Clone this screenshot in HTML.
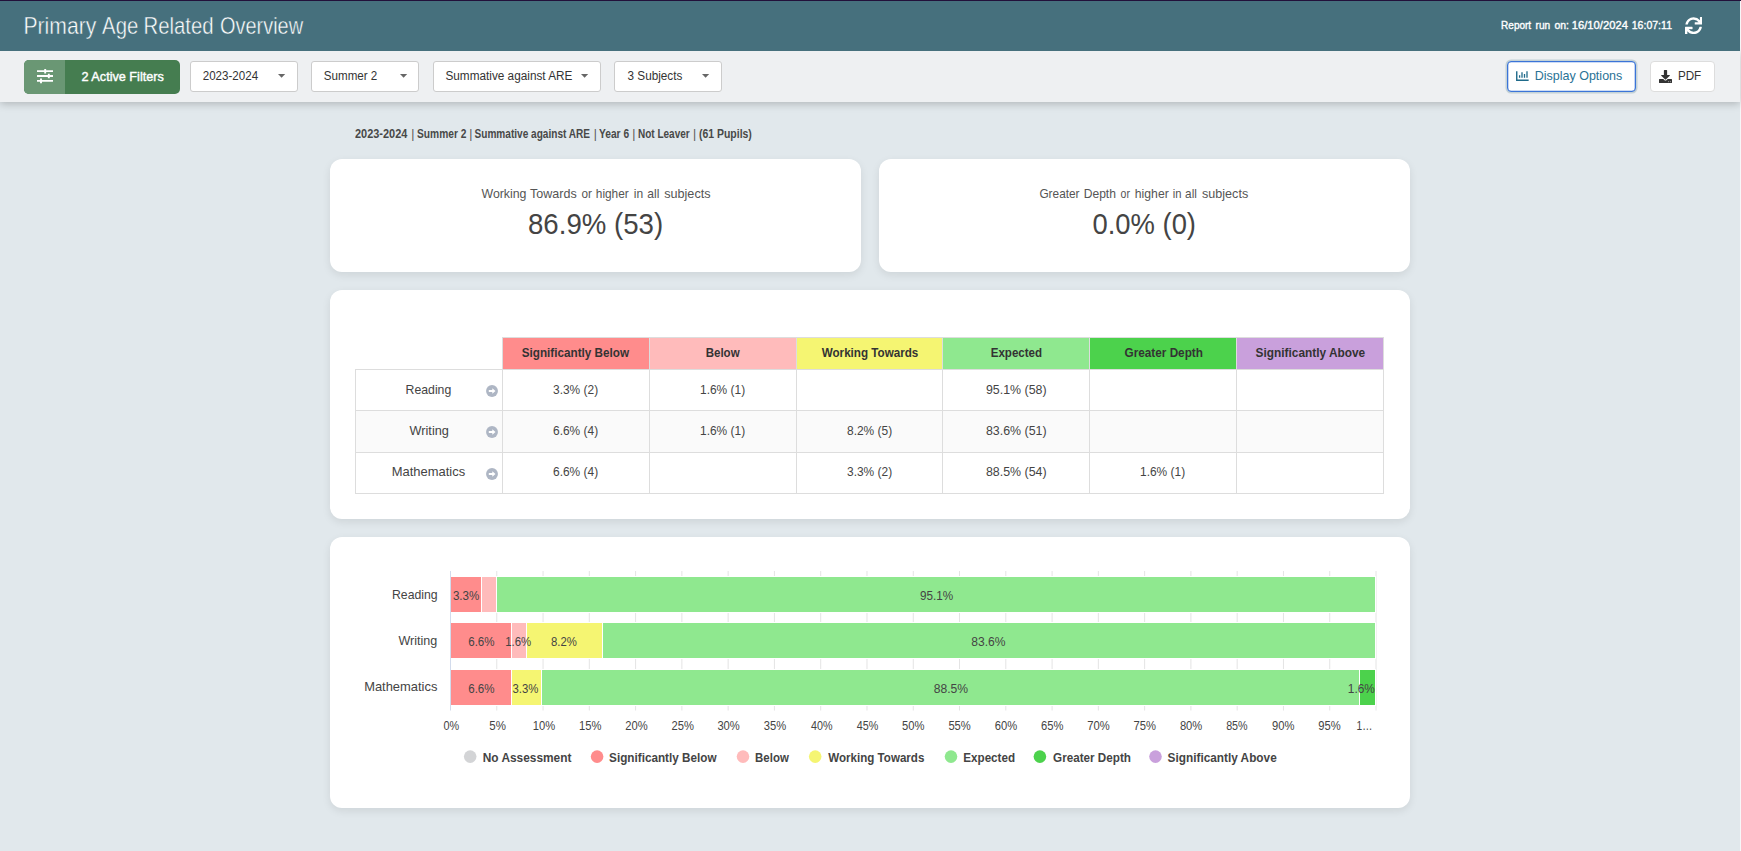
<!DOCTYPE html>
<html lang="en">
<head>
<meta charset="utf-8">
<title>Primary Age Related Overview</title>
<style>
*{box-sizing:border-box;margin:0;padding:0}
html,body{width:1741px;height:851px;overflow:hidden}
body{position:relative;background:#f6f7f8;font-family:"Liberation Sans",sans-serif;color:#444;font-size:13px}
.abs{position:absolute}
.fx{display:inline-block;white-space:nowrap;transform-origin:50% 50%}
.fx.l{transform-origin:0 50%}
.fx.r{transform-origin:100% 50%}
#page{position:absolute;left:0;top:0;width:1740px;height:851px;background:#e1e8ec}
#topline{position:absolute;left:0;top:0;width:1741px;height:1px;background:#22103a;z-index:5}
#header{position:absolute;left:0;top:1px;width:1740px;height:50px;background:#46707d;z-index:4}
#title{position:absolute;left:24px;top:10.400px;font-size:23.400px;line-height:30px;color:#fff;white-space:nowrap;-webkit-text-stroke:.450px #46707d}
#runon{position:absolute;left:1500px;top:16px;font-size:11.5px;line-height:16px;color:#fff;-webkit-text-stroke:.38px #fff;white-space:nowrap}
#toolbar{position:absolute;left:0;top:51px;width:1740px;height:51px;background:#eef0f2;box-shadow:0 2px 8px rgba(0,0,0,.22);z-index:3}
#filters{position:absolute;left:24px;top:9px;width:156px;height:34px;border-radius:5px;background:#457d50;overflow:hidden}
#filters .ico{position:absolute;left:0;top:0;width:41px;height:34px;background:#6a9774}
#filters .lbl{position:absolute;left:57px;top:0;height:34px;line-height:34px;color:#fff;-webkit-text-stroke:.4px #fff;font-size:12.5px;white-space:nowrap}
.dd{position:absolute;top:10px;height:31px;background:#fff;border:1px solid #ccc;border-radius:3px;font-size:12px;line-height:29px;color:#333;padding-left:11px;white-space:nowrap}
.dd svg{position:absolute;top:12.200px}
.btn{position:absolute;background:#fff;border-radius:4px;font-size:13px;white-space:nowrap}
.crumbs{position:absolute;left:354px;top:125.700px;font-size:12px;line-height:16px;font-weight:bold;color:#484848;white-space:nowrap}
.pipe{font-weight:normal;color:#555}
.card{position:absolute;background:#fff;border-radius:12px;box-shadow:0 3px 8px rgba(0,0,0,.085)}
.stat .t{position:absolute;left:0;right:0;top:26px;text-align:center;font-size:13px;line-height:18px;color:#555}
.stat .t.tw{text-align:left;height:18px}
.stat .v{position:absolute;left:0;right:0;top:45.900px;text-align:center;font-size:29.500px;line-height:38px;color:#444}
.th{position:absolute;top:47px;height:33px;border:1px solid #ddd;border-bottom:none;border-right:none;text-align:center;font-weight:bold;font-size:13px;line-height:30px;color:#333;white-space:nowrap}
.gl{position:absolute;background:#ddd}
.rowbg{position:absolute;left:26px;width:1028px;background:#fafafa}
.tx{position:absolute;text-align:center;font-size:13px;line-height:16px;color:#444;white-space:nowrap}
.arr{position:absolute}
svg text.cat{font-size:13px;fill:#444}
svg text.dl{font-size:12.5px;fill:#444}
svg text.ax{font-size:12px;fill:#444}
svg text.lg{font-size:12px;fill:#444;font-weight:bold}
</style>
</head>
<body>
<div id="page">
<div id="topline"></div>
<div id="header">
<div id="title"><span class="abs" style="left:1.6px;top:0"><span class="fx l" id="f_tw0" style="transform:translateX(-2.50px) scaleX(0.9028)">Primary</span></span><span class="abs" style="left:78.4px;top:0"><span class="fx l" id="f_tw1" style="transform:translateX(0.10px) scaleX(0.8684)">Age</span></span><span class="abs" style="left:120.7px;top:0"><span class="fx l" id="f_tw2" style="transform:translateX(-1.50px) scaleX(0.8692)">Related</span></span><span class="abs" style="left:195.9px;top:0"><span class="fx l" id="f_tw3" style="transform:translateX(0.00px) scaleX(0.8522)">Overview</span></span></div>
<div id="runon"><span class="abs" style="left:0.9px;top:0"><span class="fx l" id="f_rw0" style="transform:translateX(0.10px) scaleX(0.8705)">Report</span></span><span class="abs" style="left:35.6px;top:0"><span class="fx l" id="f_rw1" style="transform:translateX(-0.40px) scaleX(0.8789)">run</span></span><span class="abs" style="left:53.9px;top:0"><span class="fx l" id="f_rw2" style="transform:translateX(0.40px) scaleX(0.9062)">on:</span></span><span class="abs" style="left:71.8px;top:0"><span class="fx l" id="f_rw3" style="transform:translateX(-0.20px) scaleX(0.9741)">16/10/2024</span></span><span class="abs" style="left:132.0px;top:0"><span class="fx l" id="f_rw4" style="transform:translateX(-0.30px) scaleX(0.9182)">16:07:11</span></span></div>
<svg class="abs" style="left:1684.800px;top:15.900px" width="17.300" height="17.400" viewBox="0 0 512 512" preserveAspectRatio="none"><path fill="#fff" d="M440.650 12.570l4 82.770A247.160 247.160 0 0 0 255.830 8C134.730 8 33.910 94.920 12.290 209.820A12 12 0 0 0 24.090 224h49.050a12 12 0 0 0 11.670-9.260 175.910 175.910 0 0 1 317-56.940l-101.460-4.860a12 12 0 0 0-12.570 12v47.410a12 12 0 0 0 12 12H500a12 12 0 0 0 12-12V12a12 12 0 0 0-12-12h-47.370a12 12 0 0 0-11.980 12.570zM255.830 432a175.610 175.610 0 0 1-146-77.800l101.800 4.870a12 12 0 0 0 12.570-12v-47.400a12 12 0 0 0-12-12H12a12 12 0 0 0-12 12V500a12 12 0 0 0 12 12h47.350a12 12 0 0 0 12-12.600l-4.150-82.570A247.170 247.170 0 0 0 255.830 504c121.110 0 221.930-86.920 243.550-201.820a12 12 0 0 0-11.800-14.180h-49.050a12 12 0 0 0-11.670 9.260A175.860 175.860 0 0 1 255.830 432z"/></svg>
</div>
<div id="toolbar">
<div id="filters"><div class="ico"><svg class="abs" style="left:13px;top:9px" width="16" height="16" viewBox="0 0 16 16"><g stroke="#fff" fill="none"><path d="M0 2.100h16M0 7h16M0 11.900h16" stroke-width="1.800"/><path d="M8.200 -0.200v4.600M11.800 4.700v4.600M4 9.600v4.600" stroke-width="1.900"/></g></svg></div>
<div class="lbl"><span class="fx l" id="f_filters" style="transform:translateX(0.50px) scaleX(1.0128)">2 Active Filters</span></div></div>
<div class="dd" style="left:190px;width:108px"><span class="fx l" id="f_dd1" style="transform:translateX(0.70px) scaleX(0.9655)">2023-2024</span><svg style="left:87.2px" width="8" height="5" viewBox="0 0 8 5"><path d="M0 0h7.200L3.600 3.800z" fill="#666"/></svg></div>
<div class="dd" style="left:311px;width:108px"><span class="fx l" id="f_dd2" style="transform:translateX(0.80px) scaleX(0.9669)">Summer 2</span><svg style="left:88.2px" width="8" height="5" viewBox="0 0 8 5"><path d="M0 0h7.200L3.600 3.800z" fill="#666"/></svg></div>
<div class="dd" style="left:433px;width:168px"><span class="fx l" id="f_dd3" style="transform:translateX(0.40px) scaleX(0.9819)">Summative against ARE</span><svg style="left:147.2px" width="8" height="5" viewBox="0 0 8 5"><path d="M0 0h7.200L3.600 3.800z" fill="#666"/></svg></div>
<div class="dd" style="left:614px;width:108px"><span class="fx l" id="f_dd4" style="transform:translateX(1.50px) scaleX(0.9790)">3 Subjects</span><svg style="left:87.2px" width="8" height="5" viewBox="0 0 8 5"><path d="M0 0h7.200L3.600 3.800z" fill="#666"/></svg></div>
<div class="btn" style="left:1507px;top:10px;width:129px;height:31px;border:1px solid #3b74d8;box-shadow:0 0 0 1.500px rgba(110,145,155,.32), inset 0 0 0 .300px #3b74d8;color:#2a7296"><svg class="abs" style="left:8px;top:9px" width="13" height="11" viewBox="0 0 13 11"><path d="M0.750 0.200v9h11.900" stroke="#1f6a8a" stroke-width="1.400" fill="none"/><path d="M3.600 4.200v2.600M6 1.200v5.600M8.500 3v3.800M11 0.200v6.600" stroke="#1f6a8a" stroke-width="1.300" fill="none"/></svg><span class="abs" style="left:28px;top:0;line-height:28px"><span class="fx l" id="f_disp" style="transform:translateX(-1.30px) scaleX(0.9622)">Display Options</span></span></div>
<div class="btn" style="left:1650px;top:10px;width:65px;height:31px;border:1px solid #ddd;color:#333"><svg class="abs" style="left:8px;top:8px" width="13" height="13" viewBox="0 0 512 512"><path fill="#333" d="M216 0h80c13.300 0 24 10.700 24 24v168h87.700c17.800 0 26.700 21.500 14.100 34.100L269.700 378.300c-7.500 7.500-19.800 7.500-27.300 0L90.100 226.100c-12.600-12.600-3.700-34.100 14.100-34.100H192V24c0-13.300 10.700-24 24-24zm296 376v112c0 13.300-10.700 24-24 24H24c-13.300 0-24-10.700-24-24V376c0-13.300 10.700-24 24-24h146.700l49 49c20.100 20.100 52.500 20.100 72.600 0l49-49H488c13.300 0 24 10.700 24 24z"/><circle cx="380" cy="464" r="19" fill="#fff"/><circle cx="444" cy="464" r="19" fill="#fff"/></svg><span class="abs" style="left:27px;top:0;line-height:28px"><span class="fx l" id="f_pdf" style="transform:translateX(-0.10px) scaleX(0.8981)">PDF</span></span></div>
</div>
<div class="crumbs"><span class="abs" style="left:0.7px;top:0"><span class="fx l" id="f_cw0" style="transform:translateX(-0.00px) scaleX(0.9130)">2023-2024</span></span><span class="abs pipe" style="left:57.2px;top:0">|</span><span class="abs" style="left:62.6px;top:0"><span class="fx l" id="f_cw2" style="transform:translateX(0.00px) scaleX(0.8521)">Summer 2</span></span><span class="abs pipe" style="left:115.3px;top:0">|</span><span class="abs" style="left:120.7px;top:0"><span class="fx l" id="f_cw4" style="transform:translateX(-0.50px) scaleX(0.8399)">Summative against ARE</span></span><span class="abs pipe" style="left:239.8px;top:0">|</span><span class="abs" style="left:245.3px;top:0"><span class="fx l" id="f_cw6" style="transform:translateX(-0.00px) scaleX(0.8495)">Year 6</span></span><span class="abs pipe" style="left:278.3px;top:0">|</span><span class="abs" style="left:284.2px;top:0"><span class="fx l" id="f_cw8" style="transform:translateX(0.00px) scaleX(0.8330)">Not Leaver</span></span><span class="abs pipe" style="left:338.9px;top:0">|</span><span class="abs" style="left:344.6px;top:0"><span class="fx l" id="f_cw10" style="transform:translateX(0.00px) scaleX(0.8707)">(61 Pupils)</span></span></div>
<div class="card stat" style="left:330px;top:159px;width:531px;height:113px"><div class="t tw"><span class="abs" style="left:150.5px;top:0"><span class="fx l" id="f_s1w0" style="transform:translateX(0.50px) scaleX(0.9479)">Working</span></span><span class="abs" style="left:200.1px;top:0"><span class="fx l" id="f_s1w1" style="transform:translateX(0.10px) scaleX(0.9634)">Towards</span></span><span class="abs" style="left:251.1px;top:0"><span class="fx l" id="f_s1w2" style="transform:translateX(0.50px) scaleX(0.9000)">or</span></span><span class="abs" style="left:266.0px;top:0"><span class="fx l" id="f_s1w3" style="transform:translateX(-0.20px) scaleX(0.9114)">higher</span></span><span class="abs" style="left:303.9px;top:0"><span class="fx l" id="f_s1w4" style="transform:translateX(-0.20px) scaleX(0.9245)">in</span></span><span class="abs" style="left:316.9px;top:0"><span class="fx l" id="f_s1w5" style="transform:translateX(0.30px) scaleX(0.9308)">all</span></span><span class="abs" style="left:333.2px;top:0"><span class="fx l" id="f_s1w6" style="transform:translateX(1.20px) scaleX(0.9713)">subjects</span></span></div><div class="v"><span class="fx c" id="f_s1v" style="transform:translateX(0.40px) scaleX(0.9363)">86.9% (53)</span></div></div>
<div class="card stat" style="left:879px;top:159px;width:531px;height:113px"><div class="t tw"><span class="abs" style="left:160.8px;top:0"><span class="fx l" id="f_s2w0" style="transform:translateX(-0.60px) scaleX(0.9114)">Greater</span></span><span class="abs" style="left:205.5px;top:0"><span class="fx l" id="f_s2w1" style="transform:translateX(-1.30px) scaleX(0.9294)">Depth</span></span><span class="abs" style="left:241.3px;top:0"><span class="fx l" id="f_s2w2" style="transform:translateX(0.60px) scaleX(0.8083)">or</span></span><span class="abs" style="left:255.8px;top:0"><span class="fx l" id="f_s2w3" style="transform:translateX(-0.20px) scaleX(0.9389)">higher</span></span><span class="abs" style="left:294.0px;top:0"><span class="fx l" id="f_s2w4" style="transform:translateX(-0.30px) scaleX(0.8600)">in</span></span><span class="abs" style="left:306.7px;top:0"><span class="fx l" id="f_s2w5" style="transform:translateX(-0.90px) scaleX(0.9065)">all</span></span><span class="abs" style="left:323.0px;top:0"><span class="fx l" id="f_s2w6" style="transform:translateX(0.00px) scaleX(0.9688)">subjects</span></span></div><div class="v"><span class="fx c" id="f_s2v" style="transform:translateX(-0.50px) scaleX(0.9283)">0.0% (0)</span></div></div>
<div class="card" id="tcard" style="left:330px;top:290px;width:1080px;height:229px">
<div class="rowbg" style="top:121px;height:41px"></div>
<div class="th" style="left:172px;width:147px;background:#ff8c8c"><span class="fx c" id="f_h0" style="transform:translateX(-0.20px) scaleX(0.9004)">Significantly Below</span></div>
<div class="th" style="left:319px;width:147px;background:#ffbbbb"><span class="fx c" id="f_h1" style="transform:translateX(-0.50px) scaleX(0.8872)">Below</span></div>
<div class="th" style="left:466px;width:146px;background:#f5f572"><span class="fx c" id="f_h2" style="transform:translateX(0.10px) scaleX(0.8957)">Working Towards</span></div>
<div class="th" style="left:612px;width:147px;background:#8fe88f"><span class="fx c" id="f_h3" style="transform:translateX(0.50px) scaleX(0.8897)">Expected</span></div>
<div class="th" style="left:759px;width:147px;background:#4cd24c"><span class="fx c" id="f_h4" style="transform:translateX(0.40px) scaleX(0.9037)">Greater Depth</span></div>
<div class="th" style="left:906px;width:147px;background:#c9a0dc"><span class="fx c" id="f_h5" style="transform:translateX(0.30px) scaleX(0.9125)">Significantly Above</span></div>
<div class="gl" style="left:25px;top:79px;width:1029px;height:1px"></div>
<div class="gl" style="left:25px;top:120px;width:1029px;height:1px"></div>
<div class="gl" style="left:25px;top:162px;width:1029px;height:1px"></div>
<div class="gl" style="left:25px;top:203px;width:1029px;height:1px"></div>
<div class="gl" style="left:25px;top:79px;width:1px;height:125px"></div>
<div class="gl" style="left:172px;top:47px;width:1px;height:157px"></div>
<div class="gl" style="left:319px;top:47px;width:1px;height:157px"></div>
<div class="gl" style="left:466px;top:47px;width:1px;height:157px"></div>
<div class="gl" style="left:612px;top:47px;width:1px;height:157px"></div>
<div class="gl" style="left:759px;top:47px;width:1px;height:157px"></div>
<div class="gl" style="left:906px;top:47px;width:1px;height:157px"></div>
<div class="gl" style="left:1053px;top:47px;width:1px;height:157px"></div>
<div class="tx" style="left:25px;width:148px;top:91.5px"><span class="fx c" id="f_r0" style="transform:translateX(-0.80px) scaleX(0.9428)">Reading</span></div>
<svg class="arr" style="left:156.2px;top:95.2px" width="12" height="12" viewBox="0 0 12 12"><circle cx="6" cy="6" r="5.950" fill="#aeb6c4"/><path d="M2.800 5h3.500V3.300L9.500 6 6.300 8.700V7H2.800z" fill="#fff"/></svg>
<div class="tx" style="left:172px;width:148px;top:91.5px"><span class="fx c" id="f_c0_0" style="transform:translateX(0.00px) scaleX(0.9176)">3.3% (2)</span></div>
<div class="tx" style="left:319px;width:148px;top:91.5px"><span class="fx c" id="f_c0_1" style="transform:translateX(0.00px) scaleX(0.9176)">1.6% (1)</span></div>
<div class="tx" style="left:612px;width:148px;top:91.5px"><span class="fx c" id="f_c0_3" style="transform:translateX(0.50px) scaleX(0.9534)">95.1% (58)</span></div>
<div class="tx" style="left:25px;width:148px;top:133.4px"><span class="fx c" id="f_r1" style="transform:translateX(0.10px) scaleX(0.9787)">Writing</span></div>
<svg class="arr" style="left:156.2px;top:136.0px" width="12" height="12" viewBox="0 0 12 12"><circle cx="6" cy="6" r="5.950" fill="#aeb6c4"/><path d="M2.800 5h3.500V3.300L9.500 6 6.300 8.700V7H2.800z" fill="#fff"/></svg>
<div class="tx" style="left:172px;width:148px;top:133.4px"><span class="fx c" id="f_c1_0" style="transform:translateX(0.00px) scaleX(0.9176)">6.6% (4)</span></div>
<div class="tx" style="left:319px;width:148px;top:133.4px"><span class="fx c" id="f_c1_1" style="transform:translateX(0.00px) scaleX(0.9176)">1.6% (1)</span></div>
<div class="tx" style="left:466px;width:147px;top:133.4px"><span class="fx c" id="f_c1_2" style="transform:translateX(0.00px) scaleX(0.9184)">8.2% (5)</span></div>
<div class="tx" style="left:612px;width:148px;top:133.4px"><span class="fx c" id="f_c1_3" style="transform:translateX(0.50px) scaleX(0.9534)">83.6% (51)</span></div>
<div class="tx" style="left:25px;width:148px;top:174.4px"><span class="fx c" id="f_r2" style="transform:translateX(-0.40px) scaleX(0.9948)">Mathematics</span></div>
<svg class="arr" style="left:156.2px;top:178.0px" width="12" height="12" viewBox="0 0 12 12"><circle cx="6" cy="6" r="5.950" fill="#aeb6c4"/><path d="M2.800 5h3.500V3.300L9.500 6 6.300 8.700V7H2.800z" fill="#fff"/></svg>
<div class="tx" style="left:172px;width:148px;top:174.4px"><span class="fx c" id="f_c2_0" style="transform:translateX(0.00px) scaleX(0.9176)">6.6% (4)</span></div>
<div class="tx" style="left:466px;width:147px;top:174.4px"><span class="fx c" id="f_c2_2" style="transform:translateX(0.00px) scaleX(0.9184)">3.3% (2)</span></div>
<div class="tx" style="left:612px;width:148px;top:174.4px"><span class="fx c" id="f_c2_3" style="transform:translateX(0.50px) scaleX(0.9534)">88.5% (54)</span></div>
<div class="tx" style="left:759px;width:148px;top:174.4px"><span class="fx c" id="f_c2_4" style="transform:translateX(0.00px) scaleX(0.9176)">1.6% (1)</span></div>
</div>
<div class="card" id="ccard" style="left:330px;top:537px;width:1080px;height:271px">
<svg class="abs" style="left:0;top:0" width="1080" height="271" viewBox="0 0 1080 271" font-family="Liberation Sans, sans-serif">
<path d="M166.78 34V173.5 M213.05 34V173.5 M259.32 34V173.5 M305.60 34V173.5 M351.88 34V173.5 M398.15 34V173.5 M444.43 34V173.5 M490.70 34V173.5 M536.98 34V173.5 M583.25 34V173.5 M629.52 34V173.5 M675.80 34V173.5 M722.08 34V173.5 M768.35 34V173.5 M814.62 34V173.5 M860.90 34V173.5 M907.17 34V173.5 M953.45 34V173.5 M999.73 34V173.5 M1046.00 34V173.5" stroke="#e4e4e4" stroke-width="1" fill="none"/>
<rect x="120.5" y="39.5" width="31.0" height="36" fill="#ff8c8c" stroke="#fff" stroke-width="1"/>
<rect x="151.5" y="39.5" width="15.0" height="36" fill="#ffbbbb" stroke="#fff" stroke-width="1"/>
<rect x="166.5" y="39.5" width="879.0" height="36" fill="#8fe88f" stroke="#fff" stroke-width="1"/>
<text class="cat" id="f_cat0" x="107.60" y="61.8" text-anchor="end" textLength="45.58" lengthAdjust="spacingAndGlyphs">Reading</text>
<rect x="120.5" y="85.5" width="61.0" height="36" fill="#ff8c8c" stroke="#fff" stroke-width="1"/>
<rect x="181.5" y="85.5" width="15.0" height="36" fill="#ffbbbb" stroke="#fff" stroke-width="1"/>
<rect x="196.5" y="85.5" width="76.0" height="36" fill="#f5f572" stroke="#fff" stroke-width="1"/>
<rect x="272.5" y="85.5" width="773.0" height="36" fill="#8fe88f" stroke="#fff" stroke-width="1"/>
<text class="cat" id="f_cat1" x="107.30" y="107.8" text-anchor="end" textLength="38.81" lengthAdjust="spacingAndGlyphs">Writing</text>
<rect x="120.5" y="132.5" width="61.0" height="36" fill="#ff8c8c" stroke="#fff" stroke-width="1"/>
<rect x="181.5" y="132.5" width="30.0" height="36" fill="#f5f572" stroke="#fff" stroke-width="1"/>
<rect x="211.5" y="132.5" width="818.0" height="36" fill="#8fe88f" stroke="#fff" stroke-width="1"/>
<rect x="1029.5" y="132.5" width="16.0" height="36" fill="#4cd24c" stroke="#fff" stroke-width="1"/>
<text class="cat" id="f_cat2" x="107.40" y="154.2" text-anchor="end" textLength="73.23" lengthAdjust="spacingAndGlyphs">Mathematics</text>
<path d="M120.5 34V173.5" stroke="#d2dbec" stroke-width="1" fill="none"/>
<text class="dl" id="f_d0_0" x="136.15" y="62.8" text-anchor="middle" textLength="26.46" lengthAdjust="spacingAndGlyphs">3.3%</text>
<text class="dl" id="f_d0_2" x="606.62" y="62.8" text-anchor="middle" textLength="33.23" lengthAdjust="spacingAndGlyphs">95.1%</text>
<text class="dl" id="f_d1_0" x="151.40" y="108.8" text-anchor="middle" textLength="26.36" lengthAdjust="spacingAndGlyphs">6.6%</text>
<text class="dl" id="f_d1_1" x="188.26" y="108.8" text-anchor="middle" textLength="26.06" lengthAdjust="spacingAndGlyphs">1.6%</text>
<text class="dl" id="f_d1_2" x="233.91" y="108.8" text-anchor="middle" textLength="25.89" lengthAdjust="spacingAndGlyphs">8.2%</text>
<text class="dl" id="f_d1_3" x="658.44" y="108.8" text-anchor="middle" textLength="34.28" lengthAdjust="spacingAndGlyphs">83.6%</text>
<text class="dl" id="f_d2_0" x="151.40" y="155.8" text-anchor="middle" textLength="26.36" lengthAdjust="spacingAndGlyphs">6.6%</text>
<text class="dl" id="f_d2_1" x="195.44" y="155.8" text-anchor="middle" textLength="25.88" lengthAdjust="spacingAndGlyphs">3.3%</text>
<text class="dl" id="f_d2_2" x="620.87" y="155.8" text-anchor="middle" textLength="34.33" lengthAdjust="spacingAndGlyphs">88.5%</text>
<text class="dl" id="f_d2_3" x="1031.33" y="155.8" text-anchor="middle" textLength="27.07" lengthAdjust="spacingAndGlyphs">1.6%</text>
<text class="ax" id="f_ax0" x="121.30" y="193.2" text-anchor="middle" textLength="15.69" lengthAdjust="spacingAndGlyphs">0%</text>
<text class="ax" id="f_ax1" x="167.60" y="193.2" text-anchor="middle" textLength="16.58" lengthAdjust="spacingAndGlyphs">5%</text>
<text class="ax" id="f_ax2" x="213.90" y="193.2" text-anchor="middle" textLength="22.43" lengthAdjust="spacingAndGlyphs">10%</text>
<text class="ax" id="f_ax3" x="260.20" y="193.2" text-anchor="middle" textLength="22.43" lengthAdjust="spacingAndGlyphs">15%</text>
<text class="ax" id="f_ax4" x="306.50" y="193.2" text-anchor="middle" textLength="22.43" lengthAdjust="spacingAndGlyphs">20%</text>
<text class="ax" id="f_ax5" x="352.80" y="193.2" text-anchor="middle" textLength="22.43" lengthAdjust="spacingAndGlyphs">25%</text>
<text class="ax" id="f_ax6" x="398.60" y="193.2" text-anchor="middle" textLength="22.43" lengthAdjust="spacingAndGlyphs">30%</text>
<text class="ax" id="f_ax7" x="444.90" y="193.2" text-anchor="middle" textLength="22.43" lengthAdjust="spacingAndGlyphs">35%</text>
<text class="ax" id="f_ax8" x="491.70" y="193.2" text-anchor="middle" textLength="21.53" lengthAdjust="spacingAndGlyphs">40%</text>
<text class="ax" id="f_ax9" x="537.50" y="193.2" text-anchor="middle" textLength="21.53" lengthAdjust="spacingAndGlyphs">45%</text>
<text class="ax" id="f_ax10" x="583.30" y="193.2" text-anchor="middle" textLength="22.43" lengthAdjust="spacingAndGlyphs">50%</text>
<text class="ax" id="f_ax11" x="629.60" y="193.2" text-anchor="middle" textLength="22.43" lengthAdjust="spacingAndGlyphs">55%</text>
<text class="ax" id="f_ax12" x="675.90" y="193.2" text-anchor="middle" textLength="22.43" lengthAdjust="spacingAndGlyphs">60%</text>
<text class="ax" id="f_ax13" x="722.20" y="193.2" text-anchor="middle" textLength="22.43" lengthAdjust="spacingAndGlyphs">65%</text>
<text class="ax" id="f_ax14" x="768.50" y="193.2" text-anchor="middle" textLength="22.43" lengthAdjust="spacingAndGlyphs">70%</text>
<text class="ax" id="f_ax15" x="814.80" y="193.2" text-anchor="middle" textLength="22.43" lengthAdjust="spacingAndGlyphs">75%</text>
<text class="ax" id="f_ax16" x="861.10" y="193.2" text-anchor="middle" textLength="22.43" lengthAdjust="spacingAndGlyphs">80%</text>
<text class="ax" id="f_ax17" x="906.90" y="193.2" text-anchor="middle" textLength="21.53" lengthAdjust="spacingAndGlyphs">85%</text>
<text class="ax" id="f_ax18" x="953.20" y="193.2" text-anchor="middle" textLength="22.43" lengthAdjust="spacingAndGlyphs">90%</text>
<text class="ax" id="f_ax19" x="999.50" y="193.2" text-anchor="middle" textLength="22.43" lengthAdjust="spacingAndGlyphs">95%</text>
<text class="ax" id="f_ax20" x="1034.50" y="193.2" text-anchor="middle" textLength="15.83" lengthAdjust="spacingAndGlyphs">1…</text>
<circle cx="140.2" cy="219.6" r="6.300" fill="#d3d4d6"/>
<text class="lg" id="f_lg0" x="152.70" y="224.7" textLength="88.75" lengthAdjust="spacingAndGlyphs">No Assessment</text>
<circle cx="267.1" cy="219.6" r="6.300" fill="#ff8c8c"/>
<text class="lg" id="f_lg1" x="279.10" y="224.7" textLength="107.47" lengthAdjust="spacingAndGlyphs">Significantly Below</text>
<circle cx="413.0" cy="219.6" r="6.300" fill="#ffbbbb"/>
<text class="lg" id="f_lg2" x="425.10" y="224.7" textLength="33.71" lengthAdjust="spacingAndGlyphs">Below</text>
<circle cx="485.2" cy="219.6" r="6.300" fill="#f5f572"/>
<text class="lg" id="f_lg3" x="498.30" y="224.7" textLength="96.08" lengthAdjust="spacingAndGlyphs">Working Towards</text>
<circle cx="621.0" cy="219.6" r="6.300" fill="#8fe88f"/>
<text class="lg" id="f_lg4" x="633.30" y="224.7" textLength="51.75" lengthAdjust="spacingAndGlyphs">Expected</text>
<circle cx="709.9" cy="219.6" r="6.300" fill="#4cd24c"/>
<text class="lg" id="f_lg5" x="723.10" y="224.7" textLength="77.83" lengthAdjust="spacingAndGlyphs">Greater Depth</text>
<circle cx="825.5" cy="219.6" r="6.300" fill="#c9a0dc"/>
<text class="lg" id="f_lg6" x="837.60" y="224.7" textLength="109.11" lengthAdjust="spacingAndGlyphs">Significantly Above</text>
</svg></div>
</div>
</body>
</html>
